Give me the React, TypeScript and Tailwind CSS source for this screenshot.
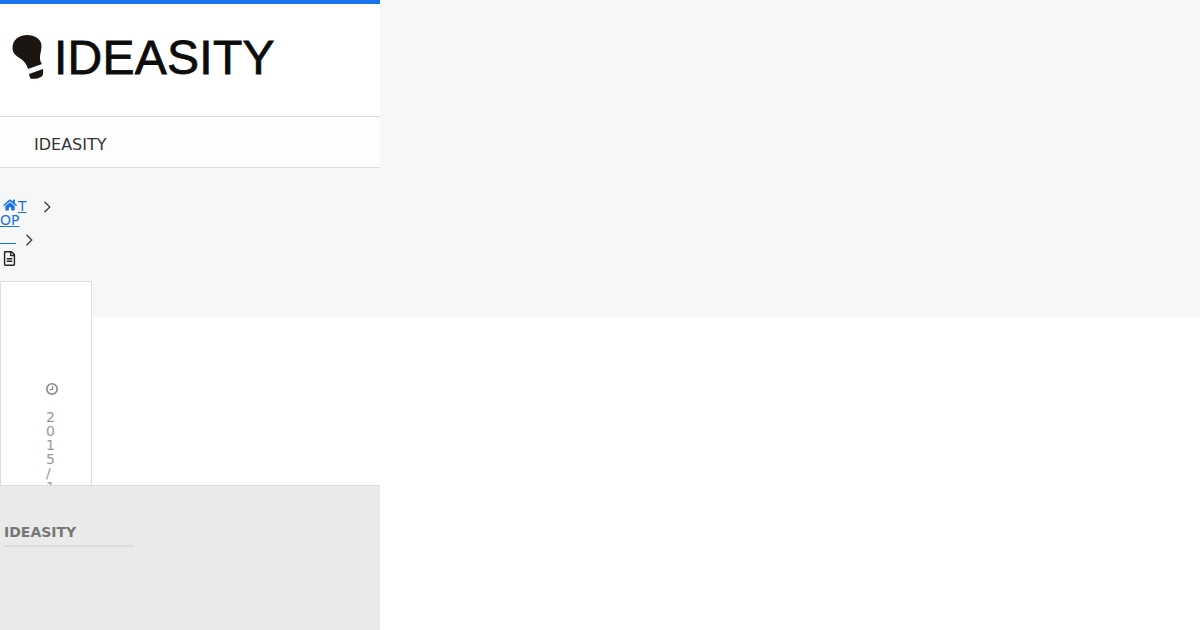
import { FaHome, FaRegFileAlt } from "react-icons/fa";

function Chevron({ className }: { className: string }) {
  return (
    <svg viewBox="0 0 8 12" width="8" height="12" fill="none" stroke="#333" strokeWidth="1.2" className={className}>
      <path d="M1.5 0.8 L6.8 6 L1.5 11.2" />
    </svg>
  );
}

export default function App() {
  return (
    <div className="flex h-screen overflow-hidden bg-white font-['DejaVu_Sans',sans-serif]">
      <aside className="flex h-screen w-[380px] shrink-0 flex-col overflow-hidden">
        <div className="h-1 bg-[#1a73e8]" />

        <div className="flex h-[112px] items-center pl-3">
          <svg viewBox="0 0 32 45" width="32" height="45" className="mb-[6px] shrink-0">
            <path
              fill="#1c1613"
              d="M15 0 C23 0 29.5 4 29.5 11 C29.5 16 27.5 20 28 24 C28.3 26 29 28 30 29 L16 34 C15 30 13 27 9 24 C4 21 0.5 18 0.5 13 C0.5 5 7 0 15 0 Z"
            />
            <path fill="#1c1613" d="M17 39 L31 34 C31.5 38 31 41 29 42 C25 44 20 44.5 18 43 Z" />
          </svg>
          <span className="mb-1 ml-[10px] font-['Liberation_Sans',sans-serif] text-[48px] leading-none tracking-[0.25px] text-[#0c0c0c] [-webkit-text-stroke:0.8px_#0c0c0c]">
            IDEASITY
          </span>
        </div>

        <nav className="flex h-[52px] items-center border-y border-[#ddd] bg-[#fdfdfd] pl-[34px] pt-[6px] text-base text-[#333]">
          IDEASITY
        </nav>

        <div className="min-h-0 flex-1 overflow-hidden">
          <div className="h-[149px] bg-[#f7f7f7] pt-[30px] text-sm leading-[14px]">
            <div className="flex items-start">
              <a className="w-[27px] break-all text-[#1a73e8] underline">
                <FaHome className="ml-[3px] inline-block align-[-1px] text-[14px]" />
                <span className="ml-[1px]">TOP</span>
              </a>
              <Chevron className="ml-4 mt-[3px]" />
            </div>
            <div className="mt-[7px] flex items-start">
              <a className="mt-[9px] h-[1px] w-4 bg-[#1a73e8]" />
              <Chevron className="ml-[9px]" />
            </div>
            <FaRegFileAlt className="ml-[2px] mt-[5px] text-[15px] text-[#222]" />
          </div>

          <article className="relative -mt-[36px] h-[210px] w-[92px] border border-[#ddd] bg-white pl-[45px] pt-[100px] text-sm leading-[14px] text-[#999]">
            <svg viewBox="0 0 14 14" width="14" height="14" fill="none" stroke="#888" className="-ml-[1px]">
              <circle cx="7" cy="7" r="5.2" strokeWidth="1.6" />
              <path d="M7.5 3.8 V7.5 H4.5" strokeWidth="1.2" />
            </svg>
            <p className="mt-[14px] w-[10px] break-all">
              2015<wbr />/<wbr />11
            </p>
          </article>
        </div>

        <footer className="h-[145px] shrink-0 border-t border-[#ddd] bg-[#eaeaea] pl-1 pt-[37px]">
          <h2 className="w-[130px] border-b-2 border-[#ddd] pb-[4px] text-sm font-bold leading-[18px] text-[#777]">IDEASITY</h2>
        </footer>
      </aside>

      <main className="h-[317px] flex-1 bg-[#f7f7f7]" />
    </div>
  );
}
